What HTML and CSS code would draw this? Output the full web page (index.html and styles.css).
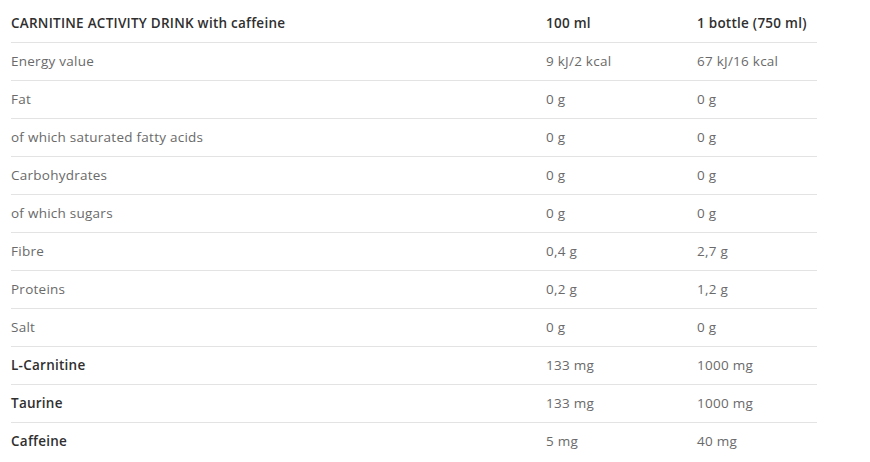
FILE: index.html
```html
<!DOCTYPE html>
<html>
<head>
<meta charset="utf-8">
<link rel="stylesheet" href="styles.css">
</head>
<body>
<div class="wrap">
<table class="nutri">
  <colgroup><col class="c1"><col class="c2"><col class="c3"></colgroup>
  <thead>
    <tr><th>CARNITINE ACTIVITY DRINK with caffeine</th><th>100 ml</th><th>1 bottle (750 ml)</th></tr>
  </thead>
  <tbody>
    <tr><td>Energy value</td><td>9 kJ/2 kcal</td><td>67 kJ/16 kcal</td></tr>
    <tr><td>Fat</td><td>0 g</td><td>0 g</td></tr>
    <tr><td>of which saturated fatty acids</td><td>0 g</td><td>0 g</td></tr>
    <tr><td>Carbohydrates</td><td>0 g</td><td>0 g</td></tr>
    <tr><td>of which sugars</td><td>0 g</td><td>0 g</td></tr>
    <tr><td>Fibre</td><td>0,4 g</td><td>2,7 g</td></tr>
    <tr><td>Proteins</td><td>0,2 g</td><td>1,2 g</td></tr>
    <tr><td>Salt</td><td>0 g</td><td>0 g</td></tr>
    <tr class="strong"><td>L-Carnitine</td><td>133 mg</td><td>1000 mg</td></tr>
    <tr class="strong"><td>Taurine</td><td>133 mg</td><td>1000 mg</td></tr>
    <tr class="strong"><td>Caffeine</td><td>5 mg</td><td>40 mg</td></tr>
  </tbody>
</table>
</div>
</body>
</html>
```
FILE: styles.css
```css
html, body { margin: 0; padding: 0; background: #fff; }
body { font-family: "Open Sans", "Liberation Sans", sans-serif; }
.wrap { padding: 5px 0 0 11px; }
.nutri { border-collapse: collapse; width: 806px; table-layout: fixed; }
.c1 { width: 535px; }
.c2 { width: 151px; }
.c3 { width: 120px; }
.nutri th, .nutri td {
  height: 36px; padding: 0 0 1px 0; text-align: left; vertical-align: middle;
  border-bottom: 1px solid #e3e3e3; font-size: 13.5px; letter-spacing: 0.25px; white-space: nowrap;
}
.nutri th { font-weight: 600; color: #2f2f2f; }
.nutri td { color: #6a6a6a; font-weight: 400; }
.nutri tr.strong td:first-child { font-weight: 600; color: #2f2f2f; }
.nutri tbody tr:last-child td { border-bottom: none; }
```
